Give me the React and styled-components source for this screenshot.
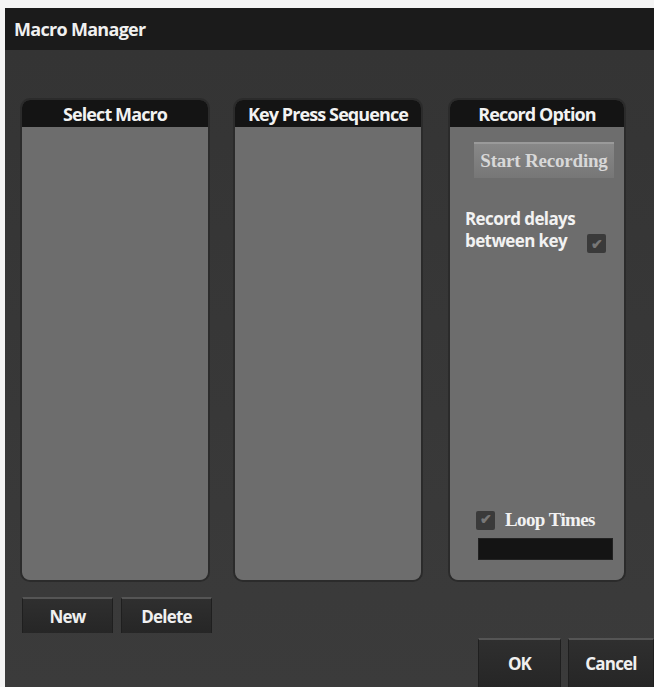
import React from "react"
import styled, { createGlobalStyle } from "styled-components"

const GlobalStyle = createGlobalStyle`
  html, body {
    margin: 0;
    padding: 0;
    background: #f4f4f4;
  }
  body {
    font-family: "Open Sans", "Liberation Sans", sans-serif;
  }
`

const Window = styled.div`
  margin: 8px 0 0 5px;
  height: 679px;
  display: flex;
  flex-direction: column;
  background-color: #393939;
  overflow: hidden;
`

const TitleBar = styled.div`
  height: 42px;
  display: flex;
  align-items: center;
  padding-left: 9px;
  background-color: #1b1b1b;
  color: #f0f0f0;
  font-size: 18px;
  font-weight: 700;
  letter-spacing: -0.7px;
`

const Body = styled.div`
  flex: 1;
  display: flex;
  flex-direction: column;
  padding: 50px 0 0 17px;
  background: linear-gradient(#343434, #3b3b3b);
`

const PanelRow = styled.div`
  display: flex;
  gap: 27px;
  height: 480px;
`

const Panel = styled.div`
  width: ${p => p.width}px;
  display: flex;
  flex-direction: column;
  border-radius: 8px;
  box-shadow: 0 0 0 2px #2b2b2b;
  overflow: hidden;
`

const PanelHeader = styled.div`
  height: 27px;
  display: flex;
  align-items: center;
  justify-content: center;
  background-color: #141414;
  color: #f2f2f2;
  font-size: 18px;
  font-weight: 700;
  letter-spacing: -0.9px;
  border-radius: 8px 8px 0 0;
  white-space: nowrap;
`

const PanelBody = styled.div`
  flex: 1;
  display: flex;
  flex-direction: column;
  background-color: #6d6d6d;
  border-radius: 0 0 6px 6px;
`

const RecordButton = styled.div`
  align-self: center;
  width: 140px;
  height: 36px;
  margin-top: 15px;
  margin-left: 14px;
  display: flex;
  align-items: center;
  justify-content: center;
  background: linear-gradient(#888, #777);
  border-top: 2px solid #9a9a9a;
  box-sizing: border-box;
  color: #d8d8d8;
  font-family: "Liberation Serif", serif;
  font-size: 19px;
  font-weight: 700;
  letter-spacing: -0.2px;
  white-space: nowrap;
`

const OptionLine = styled.div`
  display: flex;
  align-items: flex-end;
  gap: 12px;
  margin: 30px 0 0 15px;
  color: #f2f2f2;
  font-size: 17px;
  font-weight: 700;
  line-height: 22px;
  letter-spacing: -0.6px;
`

const Check = styled.span`
  width: 19px;
  height: 19px;
  flex: none;
  display: inline-flex;
  align-items: center;
  justify-content: center;
  background-color: #3a3a3a;
  border-radius: 2px;
  color: #777;
  font-size: 14px;
  line-height: 1;
  margin-bottom: ${p => p.drop || 0}px;
`

const Spacer = styled.div`
  flex: 1;
`

const LoopLine = styled.div`
  display: flex;
  align-items: center;
  gap: 10px;
  margin-left: 26px;
  color: #f2f2f2;
  font-family: "Liberation Serif", serif;
  font-size: 19px;
  font-weight: 700;
  letter-spacing: -0.6px;
`

const LoopInput = styled.div`
  width: 133px;
  height: 20px;
  margin: 7px 0 20px 28px;
  background-color: #141414;
  border: 1px solid #222;
`

const Footer = styled.div`
  flex: 1;
  display: flex;
  justify-content: space-between;
`

const ButtonGroup = styled.div`
  display: flex;
  gap: ${p => p.gap}px;
  align-self: ${p => p.align};
  margin-top: ${p => p.top || 0}px;
`

const Button = styled.div`
  width: ${p => p.width}px;
  height: ${p => p.height}px;
  display: flex;
  align-items: center;
  justify-content: center;
  box-sizing: border-box;
  background: linear-gradient(#2f2f2f, #262626);
  border-top: 2px solid #555;
  border-left: 1px solid #1f1f1f;
  border-right: 1px solid #1f1f1f;
  color: #f0f0f0;
  font-size: 17px;
  font-weight: 700;
  letter-spacing: -0.8px;
`

export default function App() {
  return (
    <>
      <GlobalStyle />
      <Window>
        <TitleBar>Macro Manager</TitleBar>
        <Body>
          <PanelRow>
            <Panel width={186}>
              <PanelHeader>Select Macro</PanelHeader>
              <PanelBody />
            </Panel>
            <Panel width={186}>
              <PanelHeader>Key Press Sequence</PanelHeader>
              <PanelBody />
            </Panel>
            <Panel width={174} style={{ marginLeft: 2 }}>
              <PanelHeader>Record Option</PanelHeader>
              <PanelBody>
                <RecordButton>Start Recording</RecordButton>
                <OptionLine>
                  <span>Record delays<br />between key</span>
                  <Check drop={-1}>✔</Check>
                </OptionLine>
                <Spacer />
                <LoopLine>
                  <Check>✔</Check>
                  <span>Loop Times</span>
                </LoopLine>
                <LoopInput />
              </PanelBody>
            </Panel>
          </PanelRow>
          <Footer>
            <ButtonGroup gap={8} align="flex-start" top={17}>
              <Button width={91} height={36}>New</Button>
              <Button width={91} height={36}>Delete</Button>
            </ButtonGroup>
            <ButtonGroup gap={7} align="flex-end">
              <Button width={83} height={49}>OK</Button>
              <Button width={86} height={49}>Cancel</Button>
            </ButtonGroup>
          </Footer>
        </Body>
      </Window>
    </>
  )
}
